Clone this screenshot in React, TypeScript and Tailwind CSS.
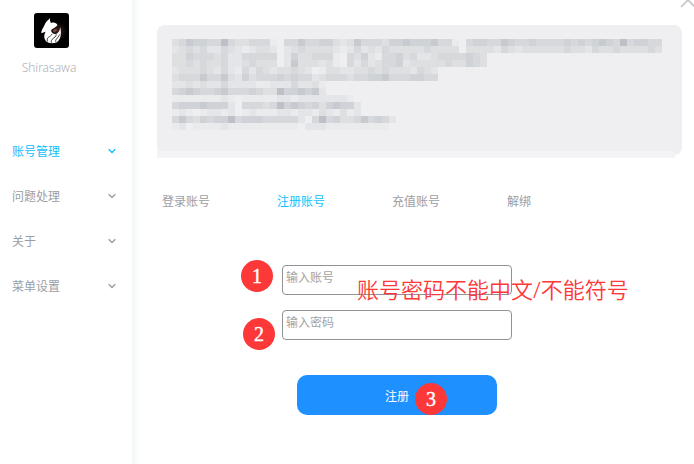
import React from "react";

const NOTICE_TONES = ["", "#eaebed", "#e4e5e8", "#dddfe1", "#d6d8db", "#cfd2d6", "#c7cacf", "#bdc0c6"];

const NOTICE_ROWS = [
  "3465544743344410446445532364443556555644104554465445444454545654745544",
  "2343422432123320234333321242324333334333303333243233333343324334333343",
  "335444342244444025334441043521445342234444543",
  "334343342234333026333231042423445233333433543",
  "23334324214243233432013322334343332432",
  "34446446325344454544234443445564445544",
  "2232322422221122242231",
  "4565445644454337556562",
  "11111112101111122122222221",
  "455565552044434756545356552",
  "121012212012111221221321312",
  "46435455745554444420474533464542",
  "1201111211111111110222111111111",
];

const MENU = ["账号管理", "问题处理", "关于", "菜单设置"];
const TABS = ["登录账号", "注册账号", "充值账号", "解绑"];

function Logo() {
  return (
    <svg className="h-[35px] w-[35px]" viewBox="0 0 35 35" role="img" aria-label="Shirasawa">
      <defs>
        <radialGradient id="ember">
          <stop offset="0" stopColor="#3b211e" />
          <stop offset="1" stopColor="#000000" />
        </radialGradient>
      </defs>
      <rect width="35" height="35" rx="3" fill="#000000" />
      <circle cx="24" cy="18" r="9" fill="url(#ember)" />
      <path
        d="M16 5 C14.5 7 12 8.5 11 11 C10 14 7.5 16 7.3 20.3 L11.5 18.8 C9.8 22 9.6 25.5 12 28.3 C14 30.5 19 30.6 22.5 29.5 C26 27 28 22.5 26.2 14 C25.8 18 24.5 20.5 21.5 21.2 C18.5 20.8 17 19 17.2 17.2 C18.5 15.5 20.5 15.4 23.5 12.3 C22.5 9.8 20 9 17 10 C16 8.5 15.8 7 16 5 Z"
        fill="#ffffff"
      />
      <path d="M18.5 17.5 L21 15.7 L23 16 L22.3 18.5 L20 19.5 Z" fill="#70413b" />
      <path
        d="M13.5 28.5 C12 23.5 16.5 24.5 18 21 M17.5 29.8 C16 25.5 21 26 22.5 21.5 M22 29.2 C20.5 26.5 24 25.5 25.5 21.5"
        fill="none"
        stroke="#1a1112"
        strokeWidth="0.8"
      />
    </svg>
  );
}

function Chevron() {
  return (
    <svg className="h-2 w-2" viewBox="0 0 8 8" fill="none" stroke="currentColor" strokeWidth="1.4" aria-hidden="true">
      <path d="M0.7 2.2 L4 5.5 L7.3 2.2" />
    </svg>
  );
}

function Notice() {
  return (
    <section aria-label="公告" className="relative h-[130px] rounded-lg bg-[#efeff1] pt-[14px] pl-[15px]">
      <svg className="h-[91px] w-[490px]" viewBox="0 0 490 91" shapeRendering="crispEdges" aria-hidden="true">
        {NOTICE_ROWS.map((row, y) =>
          row.split("").map((tone, x) =>
            tone === "0" ? null : (
              <rect key={`${x}-${y}`} x={x * 7} y={y * 7} width="7" height="7" fill={NOTICE_TONES[Number(tone)]} />
            ),
          ),
        )}
      </svg>
      <div className="absolute top-[126px] right-[7px] left-0 h-[7px] bg-[#f4f4f6]" />
    </section>
  );
}

function Badge({ value, className }: { value: number; className: string }) {
  return (
    <span
      className={`pointer-events-none absolute flex h-8 w-8 items-center justify-center rounded-full bg-[#fd3838] font-['Liberation_Serif','Noto_Sans_CJK_SC',serif] text-[20px] leading-8 text-white [-webkit-text-stroke:0.4px_white] ${className}`}
    >
      {value}
    </span>
  );
}

const FIELD =
  "h-[30px] w-[230px] rounded-[4px] border border-[#909296] bg-white px-[3px] pb-[6px] text-xs text-gray-600 outline-none placeholder:text-[#a3a3a3]";

export default function App() {
  return (
    <div className="flex min-h-screen bg-white font-['Noto_Sans','Noto_Sans_CJK_SC',sans-serif] text-xs font-normal text-[#9b9ea4]">
      <aside className="w-[132px] shrink-0">
        <div className="flex flex-col items-center pt-[13px] pr-[30px]">
          <Logo />
          <p className="mt-3 pr-1 text-xs font-light text-[#b0b0b0]">Shirasawa</p>
        </div>
        <nav className="mt-[52px]">
          {MENU.map((item, i) => (
            <button
              key={item}
              type="button"
              className={`flex h-[45px] w-full items-center justify-between pr-4 pl-3 ${i === 0 ? "text-[#12bfff]" : ""}`}
            >
              <span className="pt-0.5">{item}</span>
              <Chevron />
            </button>
          ))}
        </nav>
      </aside>
      <main className="relative min-w-0 flex-1 overflow-hidden pt-[25px] pr-3 pl-[25px]">
        <div className="absolute inset-y-0 left-0 w-2 bg-linear-to-r from-[#f3f6f8] to-white" />
        <button type="button" aria-label="关闭" className="absolute -top-2 -right-[2px] h-4 w-4">
          <svg className="h-4 w-4" viewBox="0 0 16 16" stroke="#c4c5c8" strokeWidth="1.7" aria-hidden="true">
            <path d="M1 1 L15 15 M15 1 L1 15" />
          </svg>
        </button>
        <Notice />
        <div role="tablist" className="mt-[37px] grid grid-cols-[repeat(4,115px)] pl-[5px]">
          {TABS.map((tab, i) => (
            <button
              key={tab}
              type="button"
              role="tab"
              aria-selected={i === 1}
              className={`text-left leading-5 ${i === 1 ? "text-[#12bfff]" : ""}`}
            >
              {tab}
            </button>
          ))}
        </div>
        <form className="relative mt-[53px] ml-[125px] flex w-[230px] flex-col" onSubmit={(e) => e.preventDefault()}>
          <input type="text" aria-label="输入账号" placeholder="输入账号" className={FIELD} />
          <input type="password" aria-label="输入密码" placeholder="输入密码" className={`mt-[15px] ${FIELD}`} />
          <button
            type="submit"
            className="mt-[35px] h-10 w-[200px] self-center rounded-[10px] bg-[#1e90ff] pt-[3px] text-white"
          >
            注册
          </button>
          <Badge value={1} className="top-[-5px] left-[-41px]" />
          <Badge value={2} className="top-[53px] left-[-39px]" />
          <Badge value={3} className="top-[118px] left-[133px]" />
          <p className="pointer-events-none absolute top-[8px] left-[75px] text-[22px] leading-8 font-[350] whitespace-nowrap text-[#fd3838]">
            账号密码不能中文/不能符号
          </p>
        </form>
      </main>
    </div>
  );
}
